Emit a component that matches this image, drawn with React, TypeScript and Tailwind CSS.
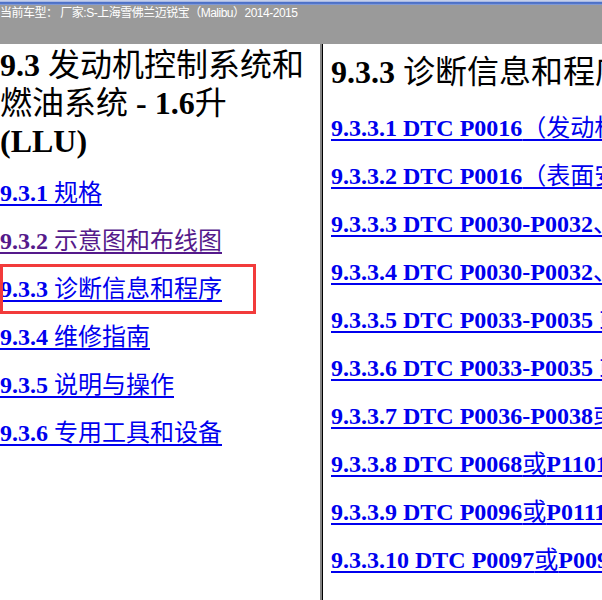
const CJK_RUN = /([\u3000-\u9fff\uff00-\uffef]+)/;

// CJK glyphs in the original come from a Song face with no real bold, so keep them regular weight
function Mixed({ text }: { text: string }) {
  return (
    <>
      {text.split(CJK_RUN).map((part, i) =>
        CJK_RUN.test(part) ? (
          <span key={i} className="font-normal">
            {part}
          </span>
        ) : (
          part
        )
      )}
    </>
  );
}

const leftLinks = [
  { label: "9.3.1 规格", visited: false, marked: false },
  { label: "9.3.2 示意图和布线图", visited: true, marked: false },
  { label: "9.3.3 诊断信息和程序", visited: false, marked: true },
  { label: "9.3.4 维修指南", visited: false, marked: false },
  { label: "9.3.5 说明与操作", visited: false, marked: false },
  { label: "9.3.6 专用工具和设备", visited: false, marked: false },
];

const rightLinks = [
  "9.3.3.1 DTC P0016（发动机转速-进气凸轮轴位置不相关）",
  "9.3.3.2 DTC P0016（表面安装的凸轮轴位置传感器）",
  "9.3.3.3 DTC P0030-P0032、P0053、P0054",
  "9.3.3.4 DTC P0030-P0032、P0135",
  "9.3.3.5 DTC P0033-P0035 或P0299",
  "9.3.3.6 DTC P0033-P0035 或P0236",
  "9.3.3.7 DTC P0036-P0038或P0141",
  "9.3.3.8 DTC P0068或P1101",
  "9.3.3.9 DTC P0096或P0111",
  "9.3.3.10 DTC P0097或P0098",
];

function TopBar() {
  return (
    <div className="h-[44px] bg-[#9a9a9a]">
      <div className="h-[5px] bg-[linear-gradient(#d3daee,#a8b9e4_30%,#4d71c8_50%,#5577c9_75%,#9aaedc)]" />
      <div className="whitespace-nowrap text-[12px] leading-[17px] tracking-[-0.5px] text-white font-['Liberation_Sans','Noto_Sans_CJK_SC',sans-serif]">
        当前车型： 厂家:S-上海雪佛兰迈锐宝（Malibu）2014-2015
      </div>
    </div>
  );
}

export default function App() {
  return (
    <div className="flex h-[600px] w-[602px] flex-col overflow-hidden bg-white font-['Liberation_Serif','Noto_Sans_CJK_SC',serif]">
      <TopBar />
      <div className="flex min-h-0 flex-1">
        {/* left frame: chapter index */}
        <div className="w-[320px] shrink-0 overflow-hidden">
          <h1 className="pt-[2px] text-[32px] font-bold leading-[38px] text-black">
            <Mixed text="9.3 发动机控制系统和" />
            <br />
            <Mixed text="燃油系统 - 1.6升" />
            <br />
            (LLU)
          </h1>
          <div className="mt-[9px]">
            {leftLinks.map((link) => (
              <div key={link.label} className="relative h-[48px] text-[24px] font-bold leading-[48px]">
                <a
                  href="#"
                  className={`underline decoration-2 underline-offset-[3px] ${
                    link.visited ? "text-[#551a8b]" : "text-[#0000ee]"
                  }`}
                >
                  <Mixed text={link.label} />
                </a>
                {link.marked && (
                  <span className="pointer-events-none absolute -top-px left-0 h-[50px] w-[256px] border-[3px] border-[#f23b3b]" />
                )}
              </div>
            ))}
          </div>
        </div>

        {/* frame divider */}
        <div className="w-[2px] shrink-0 bg-[#858585]" />
        <div className="w-px shrink-0 bg-black" />

        {/* right frame: section contents */}
        <div className="min-w-0 flex-1 overflow-hidden pl-[8px] pt-[9px]">
          <h2 className="whitespace-nowrap text-[32px] font-bold leading-[38px] text-black">
            <Mixed text="9.3.3 诊断信息和程序" />
          </h2>
          <div className="mt-[13px]">
            {rightLinks.map((label) => (
              <div key={label} className="h-[48px] whitespace-nowrap text-[24px] font-bold leading-[48px]">
                <a href="#" className="text-[#0000ee] underline decoration-2 underline-offset-[3px]">
                  <Mixed text={label} />
                </a>
              </div>
            ))}
          </div>
        </div>
      </div>
    </div>
  );
}
